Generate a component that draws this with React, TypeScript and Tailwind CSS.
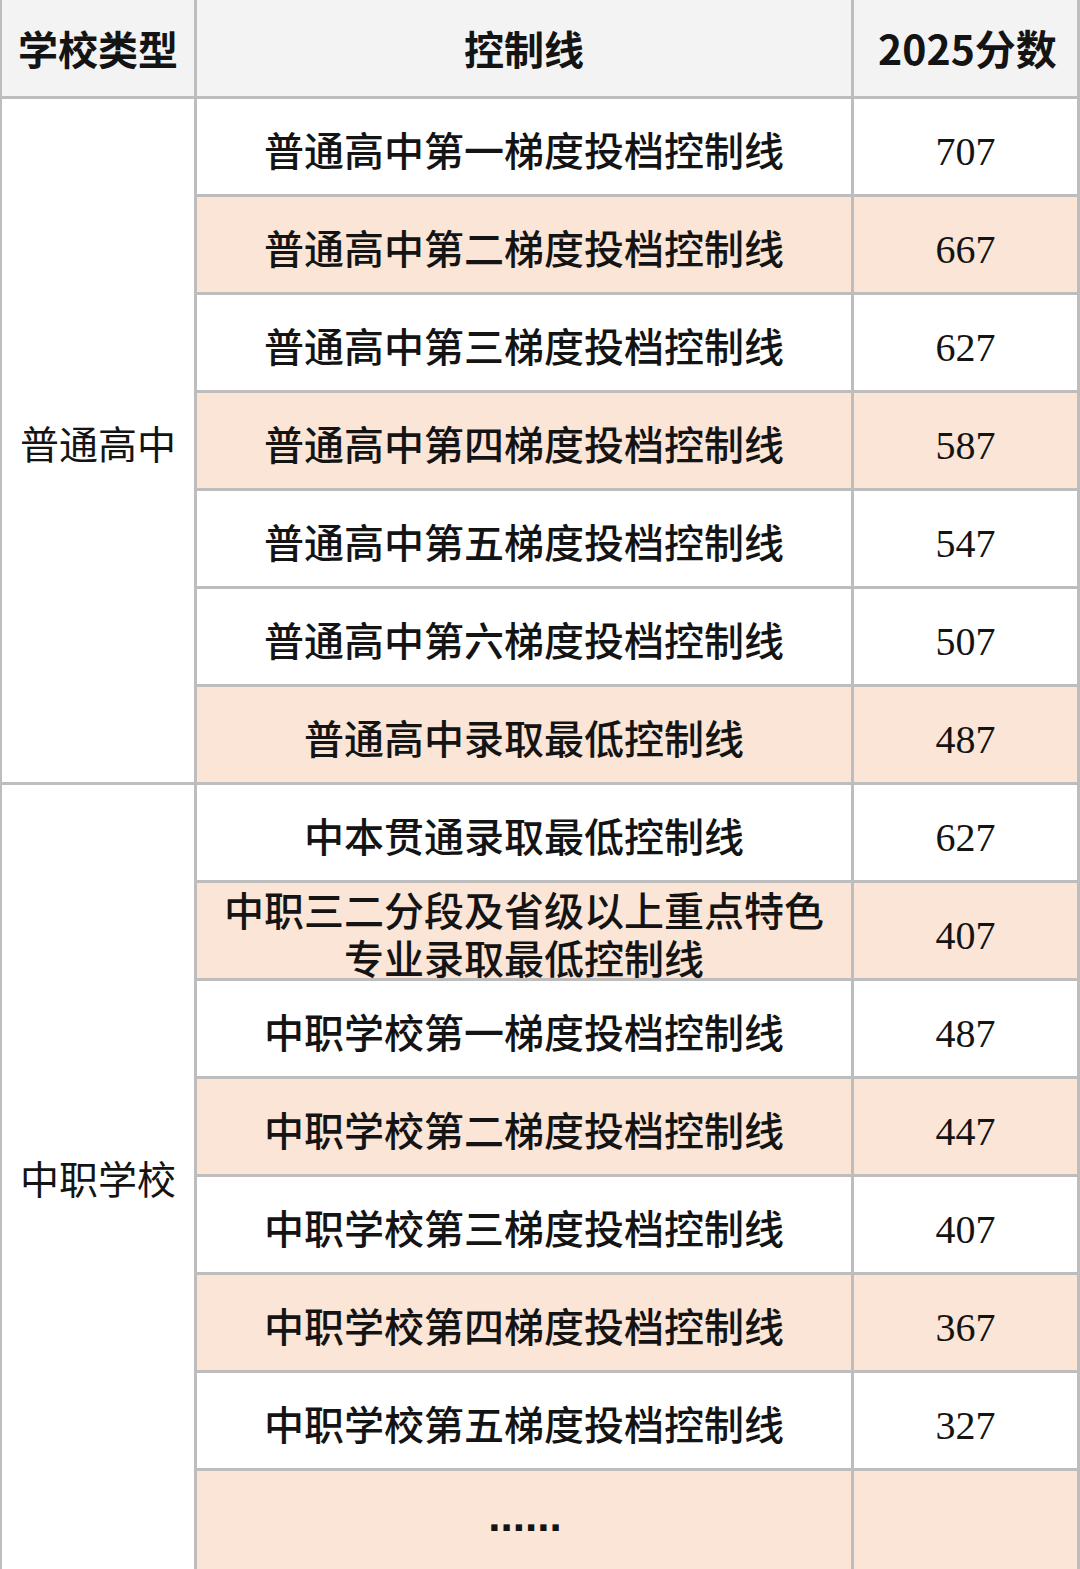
import React from 'react'

const cjk = "font-['Noto_Sans_CJK_SC',sans-serif]"
const num = "font-['Liberation_Serif','Times_New_Roman',serif]"

// [label, score, shaded]
const rows: [string, string, boolean][] = [
  ['普通高中第一梯度投档控制线', '707', false],
  ['普通高中第二梯度投档控制线', '667', true],
  ['普通高中第三梯度投档控制线', '627', false],
  ['普通高中第四梯度投档控制线', '587', true],
  ['普通高中第五梯度投档控制线', '547', false],
  ['普通高中第六梯度投档控制线', '507', false],
  ['普通高中录取最低控制线', '487', true],
  ['中本贯通录取最低控制线', '627', false],
  ['中职三二分段及省级以上重点特色\n专业录取最低控制线', '407', true],
  ['中职学校第一梯度投档控制线', '487', false],
  ['中职学校第二梯度投档控制线', '447', true],
  ['中职学校第三梯度投档控制线', '407', false],
  ['中职学校第四梯度投档控制线', '367', true],
  ['中职学校第五梯度投档控制线', '327', false],
]

export default function App() {
  return (
    <div className="w-[1080px] h-[1569px] overflow-hidden bg-white">
      <div className="grid grid-cols-[192px_654px_223px] grid-rows-[96px_repeat(14,95px)_98px] gap-[3px] bg-[#bdbdbd] px-[2px] text-[#141414]">
        {/* header */}
        <div className={`bg-[#f3f3f3] flex items-center justify-center text-[40px] font-bold ${cjk}`}>学校类型</div>
        <div className={`bg-[#f3f3f3] flex items-center justify-center text-[40px] font-bold ${cjk}`}>控制线</div>
        <div className={`bg-[#f3f3f3] flex items-center justify-center pl-[4px] text-[41px] font-bold ${cjk}`}>2025分数</div>

        <div className={`bg-white row-span-7 col-start-1 row-start-2 flex items-center justify-center pt-[4px] text-[39px] ${cjk}`}>普通高中</div>
        <div className={`bg-white row-span-8 col-start-1 row-start-9 flex items-center justify-center text-[39px] ${cjk}`}>中职学校</div>

        {rows.map(([label, score, shaded], i) => {
          const bg = shaded ? 'bg-[#fae5d6]' : 'bg-white'
          return (
            <React.Fragment key={i}>
              <div
                className={`${bg} col-start-2 flex items-center justify-center pt-[4px] text-center whitespace-pre-line text-[40px] leading-[48px] font-medium ${cjk}`}
                style={{ gridRowStart: i + 2 }}
              >
                {label}
              </div>
              <div
                className={`${bg} col-start-3 flex items-center justify-center pt-[10px] text-[40px] ${num}`}
                style={{ gridRowStart: i + 2 }}
              >
                {score}
              </div>
            </React.Fragment>
          )
        })}

        <div className="bg-[#fae5d6] col-start-2 row-start-16 flex items-center justify-center pb-[3px]">
          <span className="font-['Liberation_Sans',sans-serif] font-bold text-[44px] leading-none -mt-[6px] ml-[2px]">......</span>
        </div>
        <div className="bg-[#fae5d6] col-start-3 row-start-16" />
      </div>
    </div>
  )
}
